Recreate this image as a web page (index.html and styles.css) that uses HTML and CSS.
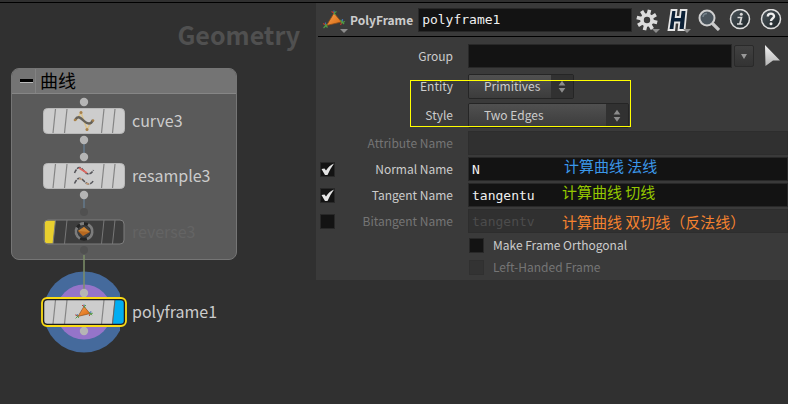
FILE: index.html
```html
<!DOCTYPE html>
<html lang="zh-CN">
<head>
<meta charset="utf-8">
<title>PolyFrame</title>
<link rel="stylesheet" href="styles.css">
</head>
<body>
<svg class="defs" aria-hidden="true">
  <defs>
    <linearGradient id="orange" x1="0" y1="0" x2="1" y2="1">
      <stop offset="0" stop-color="#f9a050"/><stop offset="1" stop-color="#d96a10"/>
    </linearGradient>
    <linearGradient id="glass" x1="0" y1="0" x2="1" y2="1">
      <stop offset="0" stop-color="#4c555b"/><stop offset="1" stop-color="#1c2326"/>
    </linearGradient>
    <linearGradient id="steel" x1="0" y1="0" x2="0" y2="1">
      <stop offset="0" stop-color="#f2f2f2"/><stop offset="1" stop-color="#b4b4b4"/>
    </linearGradient>
    <symbol id="polyframe" viewBox="0 0 24 20">
      <path d="M12 3 L19.5 12 L4.500 15.500 Z" fill="url(#orange)" stroke="#8a4a18" stroke-width=".8"/>
      <path d="M12 3.500 V0.500 M3.500 15.500 V12.500 M20.500 12 V9" stroke="#3f6fb5" stroke-width="1.200"/>
      <path d="M12 3 L9.500 1.500 M4 15 L1 13.500 M20 12 L18.500 15" stroke="#c0392b" stroke-width="1.200"/>
      <path d="M12 3 L14.500 1.500 M12 3 L13.500 5 M1.500 18 L5 14.500 M3 14.500 L5.500 17.500 M18.500 10 L22 14 M19 13 L23 11.500" stroke="#4f9b45" stroke-width="1.200"/>
    </symbol>
    <symbol id="body" viewBox="0 0 82 26">
      <rect x=".5" y=".5" width="81" height="25" rx="4" fill="#cdcdcd" stroke="#b9b9b9"/>
      <path d="M12.500 1 L10 25 M24 1 L21.500 25 M61 1 L58.500 25 M72 1 L69.500 25" stroke="#858585" stroke-width="1.200" fill="none"/>
    </symbol>
  </defs>
</svg>

<main class="workspace">
  <section class="network" aria-label="Network">
    <h1 class="context">Geometry</h1>
    <div class="group">
      <header class="group-head">
        <button class="collapse" type="button" aria-label="Collapse"><span class="minus"></span></button>
        <h2 class="group-title">曲线</h2>
      </header>
    </div>
    <svg class="wires" viewBox="0 0 120 300" aria-hidden="true">
      <circle cx="84" cy="244" r="40.500" fill="#456a9c"/>
      <circle cx="84" cy="244" r="27.500" fill="#9574c9"/>
      <path d="M84 76 V85 M84 131 V141" stroke="#64798c" stroke-width="1.500"/>
      <path d="M84 187 V221" stroke="#7c8f68" stroke-width="1.500"/>
      <g fill="#b5b5b5">
        <circle cx="84" cy="34" r="4.200"/><circle cx="84" cy="72" r="4.200"/>
        <circle cx="84" cy="89" r="4.200"/><circle cx="84" cy="127" r="4.200"/>
        <circle cx="84" cy="225" r="4.200"/><circle cx="84" cy="263" r="4.200"/>
      </g>
      <g fill="#505050"><circle cx="84" cy="144" r="4"/><circle cx="84" cy="182" r="4"/></g>
    </svg>

    <div class="node node-curve">
      <svg class="tile" viewBox="0 0 82 26" aria-hidden="true">
        <use href="#body"/>
        <path d="M33 12.500 L38 4.500 L44 21.500 L49 13" stroke="#dcc48e" stroke-width="1.500" fill="none"/>
        <path d="M32 12 C35 7 38 10 41 13 C44 16 48 17 50 12" stroke="#66625a" stroke-width="2.400" fill="none"/>
        <g fill="#a8814b"><circle cx="38" cy="4.500" r="1.500"/><circle cx="44" cy="21.500" r="1.500"/><circle cx="32" cy="12" r="1.300"/><circle cx="50" cy="12.500" r="1.300"/></g>
      </svg>
      <span class="node-name">curve3</span>
    </div>
    <div class="node node-resample">
      <svg class="tile" viewBox="0 0 82 26" aria-hidden="true">
        <use href="#body"/>
        <path d="M31.500 10 C35 2 38 4 41 8 C44 12 48 12 50.500 7 M31.500 20.500 C35 13 38 15 41 18 C44 22 48 22 50.500 17.500" stroke="#55555a" stroke-width="1.500" stroke-dasharray="4 1" fill="none"/>
        <path d="M36 5 L44 10" stroke="#e0675f" stroke-width="1.600"/>
        <path d="M36 15.500 L39 16.500 M43 20.500 L46 21" stroke="#c29a78" stroke-width="1.600"/>
      </svg>
      <span class="node-name">resample3</span>
    </div>
    <div class="node node-reverse">
      <svg class="tile" viewBox="0 0 82 26" aria-hidden="true">
        <rect x="1" y="1" width="80" height="24" rx="4" fill="#3e3e3e"/>
        <path d="M4 1.500 H12.500 L10 24.500 H4 Q1.500 24.500 1.500 21 V5 Q1.500 1.500 4 1.500" fill="#e8cf2e"/>
        <rect x="1" y="1" width="80" height="24" rx="4" fill="none" stroke="#7d7d7d"/>
        <path d="M24 1 L21.500 25 M61 1 L58.500 25 M72 1 L69.500 25 M12.500 1 L10 25" stroke="#777" stroke-width="1" fill="none"/>
        <circle cx="41" cy="12.500" r="7.800" fill="none" stroke="#242424" stroke-width="3"/>
        <path d="M37 19.500 A8 8 0 0 1 34 8.500 M37 5.500 A8 8 0 0 1 41 4.500 M45 5.500 A8 8 0 0 1 44 20" fill="none" stroke="#7c7c7c" stroke-width="2.800"/>
        <path d="M41 8 L47 13 L40 17 L35 12 Z" fill="#b76820"/><path d="M35 12 L41 8 L47 13 Z" fill="#c98335"/>
      </svg>
      <span class="node-name">reverse3</span>
    </div>
    <div class="node node-polyframe">
      <svg class="tile" viewBox="0 0 82 26" aria-hidden="true">
        <use href="#body"/>
        <path d="M72 1 H78 Q81 1 81 4 V22 Q81 25 78 25 H69.500 Z" fill="#00adf2"/>
        <path d="M72 1 L69.500 25" stroke="#666"/>
        <rect x=".500" y=".500" width="81" height="25" rx="4" fill="none" stroke="#1d1d1d" stroke-width="1.500"/>
        <rect x="-1" y="-1" width="84" height="28" rx="5" fill="none" stroke="#fadb14" stroke-width="1.800"/>
        <use href="#polyframe" x="31" y="5" width="20" height="16"/>
      </svg>
      <span class="node-name">polyframe1</span>
    </div>
  </section>

  <form class="params">
    <header class="bar">
      <button class="tool tool-op" type="button" aria-label="Operator">
        <svg class="op-icon" viewBox="0 0 24 20" aria-hidden="true"><use href="#polyframe"/></svg>
        <span class="caret"></span>
      </button>
      <label class="op-type" for="opname">PolyFrame</label>
      <input class="field op-name" id="opname" value="polyframe1">
      <div class="tools">
        <button class="tool" type="button" aria-label="Settings">
          <svg class="icon" viewBox="0 0 22 22" aria-hidden="true">
            <g stroke="#dcdcdc" stroke-width="3.600"><path d="M11 0.500 V6 M11 16 V21.500 M.500 11 H6 M16 11 H21.500 M3.600 3.600 L7.500 7.500 M14.500 14.500 L18.400 18.400 M3.600 18.400 L7.500 14.500 M14.500 7.500 L18.400 3.600" transform="rotate(14 11 11)"/></g>
            <circle cx="11" cy="11" r="5" fill="none" stroke="#dcdcdc" stroke-width="3.600"/>
          </svg>
          <span class="caret"></span>
        </button>
        <button class="tool" type="button" aria-label="Houdini">
          <svg class="icon" viewBox="0 0 22 22" aria-hidden="true">
            <path d="M4.500 1 H9.500 L8.700 8 H13 L13.800 1 H19.500 L17.500 21 H11.500 L12.300 13.500 H8 L7.200 21 H1.500 Z" fill="#0b2036" stroke="#e6e6e6" stroke-width="1.800"/>
          </svg>
          <span class="caret"></span>
        </button>
        <button class="tool" type="button" aria-label="Search">
          <svg class="icon" viewBox="0 0 22 22" aria-hidden="true">
            <path d="M14.500 14.500 L21 21" stroke="#c9c9c9" stroke-width="3.200"/>
            <circle cx="9" cy="9" r="7.500" fill="#4a545c" stroke="#cfcfcf" stroke-width="2"/>
            <path d="M5 8 A4 4 0 0 1 9 4.500" fill="none" stroke="#75828b" stroke-width="1.500"/>
          </svg>
        </button>
        <button class="tool" type="button" aria-label="Info">
          <svg class="icon" viewBox="0 0 22 22" aria-hidden="true">
            <circle cx="11" cy="10" r="9.500" fill="url(#glass)" stroke="#dedede" stroke-width="1.500"/>
            <circle cx="12.300" cy="5.300" r="1.500" fill="#d8d8d8"/>
            <path d="M8.500 8.500 H12.500 L10.800 15 H13.500 M8 15 H11" fill="none" stroke="#d8d8d8" stroke-width="1.700"/>
          </svg>
        </button>
        <button class="tool" type="button" aria-label="Help">
          <svg class="icon" viewBox="0 0 22 22" aria-hidden="true">
            <circle cx="11" cy="10" r="9.500" fill="url(#glass)" stroke="#dedede" stroke-width="1.500"/>
            <path d="M7.800 7.500 C7.800 3.500 14.300 3.800 14 7.500 C13.800 9.500 11 9.500 11 12" fill="none" stroke="#eee" stroke-width="2.400"/>
            <circle cx="11" cy="14.700" r="1.500" fill="#eee"/>
          </svg>
        </button>
      </div>
    </header>

    <div class="rows">
      <div class="row row-top">
        <label class="name" for="group">Group</label>
        <div class="group-field">
          <input class="field" id="group">
          <button class="drop" type="button" aria-label="Group menu"><span class="caret-inner"></span></button>
          <button class="pick" type="button" aria-label="Select">
            <svg class="pointer" viewBox="0 0 16 22" aria-hidden="true"><path d="M1 0 L16 15.500 L9 15.500 L1.500 21 Z" fill="url(#steel)"/></svg>
          </button>
        </div>
      </div>
      <div class="row row-menu">
        <label class="name" for="entity">Entity</label>
        <span class="menu menu-short">
          <select id="entity"><option>Primitives</option></select>
          <svg class="step" viewBox="0 0 20 24" aria-hidden="true"><path d="M10 6 L13.500 11 H6.500 Z M10 18.500 L13.500 13.500 H6.500 Z" fill="#8c8c8c"/></svg>
        </span>
      </div>
      <div class="row row-menu">
        <label class="name" for="style">Style</label>
        <span class="menu menu-long">
          <select id="style"><option>Two Edges</option></select>
          <svg class="step" viewBox="0 0 20 24" aria-hidden="true"><path d="M10 6 L13.500 11 H6.500 Z M10 18.500 L13.500 13.500 H6.500 Z" fill="#8c8c8c"/></svg>
        </span>
      </div>
      <div class="row">
        <label class="name dim" for="attr">Attribute Name</label>
        <input class="field" id="attr" disabled>
      </div>
      <div class="row">
        <input class="check" type="checkbox" aria-label="Enable Normal Name" checked>
        <label class="name" for="normal">Normal Name</label>
        <input class="field" id="normal" value="N">
        <span class="note note-blue">计算曲线 法线</span>
      </div>
      <div class="row">
        <input class="check" type="checkbox" aria-label="Enable Tangent Name" checked>
        <label class="name" for="tangent">Tangent Name</label>
        <input class="field" id="tangent" value="tangentu">
        <span class="note note-green">计算曲线 切线</span>
      </div>
      <div class="row">
        <input class="check" type="checkbox" aria-label="Enable Bitangent Name">
        <label class="name dim" for="bitangent">Bitangent Name</label>
        <input class="field" id="bitangent" value="tangentv" disabled>
        <span class="note note-orange">计算曲线 双切线（反法线）</span>
      </div>
      <label class="option"><input class="check" type="checkbox">Make Frame Orthogonal</label>
      <label class="option dim"><input class="check" type="checkbox" disabled>Left-Handed Frame</label>
      <div class="highlight"></div>
    </div>
  </form>
</main>
</body>
</html>
```
FILE: styles.css
```css
* { box-sizing: border-box; }

body {
  margin: 0;
  min-height: 100vh;
  background: #303030;
  color: #cccccc;
  font: 12px/18px "Noto Sans CJK SC", "Noto Sans", sans-serif;
}

button, input, select { font: inherit; color: inherit; margin: 0; }
button { padding: 0; border: 0; background: none; }
.defs { position: absolute; width: 0; height: 0; }

.workspace {
  display: grid;
  grid-template-columns: 316px minmax(0, 1fr);
  align-items: start;
  margin-top: 2px;
  border-top: 1px solid #000;
}

/* Network canvas */
.network { position: relative; min-height: 360px; }

.context {
  margin: 0;
  padding: 13px 16px 0 0;
  text-align: right;
  font-size: 25px;
  line-height: 36px;
  font-weight: 700;
  color: #505050;
}

.group {
  position: absolute;
  left: 11px;
  top: 65px;
  width: 226px;
  height: 192px;
  border: 1px solid #757575;
  border-radius: 8px;
  background: #5a5a5a;
  overflow: hidden;
}
.group-head {
  display: flex;
  height: 25px;
  background: #747474;
  border-bottom: 1px solid #868686;
}
.collapse {
  display: grid;
  place-items: center;
  width: 24px;
  padding-left: 6px;
  border-right: 1px solid #828282;
}
.minus { width: 13px; height: 4px; background: #000; border-bottom: 1px solid #bbb; }
.group-title {
  margin: 0 0 0 4px;
  font-size: 18px;
  line-height: 22px;
  font-weight: 400;
  color: #000;
}

.wires { position: absolute; left: 0; top: 65px; width: 120px; height: 300px; }

.node {
  position: absolute;
  left: 43px;
  display: flex;
  align-items: center;
  gap: 7px;
}
.node-curve { top: 105px; }
.node-resample { top: 160px; }
.node-reverse { top: 216px; color: #646464; }
.node-polyframe { top: 296px; }
.tile { width: 82px; height: 26px; overflow: visible; }
.node-name { padding-bottom: 2px; font-size: 16px; line-height: 24px; }

/* Parameter pane */
.params { background: #3a3a3a; padding-bottom: 2px; }

.bar {
  display: flex;
  align-items: center;
  height: 34px;
  margin-left: 2px;
  padding: 0 6px 0 4px;
  border-bottom: 1px solid #000;
}
.tool { position: relative; display: block; width: 22px; height: 24px; }
.tool-op { width: 24px; }
.op-icon { display: block; width: 24px; height: 20px; }
.icon { display: block; width: 22px; height: 22px; }
.caret {
  position: absolute;
  right: -2px;
  bottom: -1px;
  border: 4px solid transparent;
  border-top-color: #8c8c8c;
  border-bottom: 0;
}
.op-type { margin: 0 5px 0 4px; font-weight: 700; }
.tools { display: flex; gap: 9px; margin-left: 4px; }

.field {
  display: block;
  min-width: 0;
  width: 100%;
  height: 24px;
  padding: 0 3px;
  border: 1px solid #282828;
  border-radius: 0;
  background: #131313;
  color: #f0f0f0;
  font: 13px/20px "DejaVu Sans Mono", "Liberation Mono", monospace;
}
.field:disabled { background: #303030; border-color: #2d2d2d; color: #4c4c4c; }
.op-name { flex: 1; }

.rows { position: relative; padding: 7px 0 0 4px; }
.row {
  position: relative;
  display: grid;
  grid-template-columns: 16px 117px minmax(0, 1fr);
  align-items: center;
  height: 26px;
}
.row-top { height: 24px; margin-bottom: 4px; }
.row-menu { height: 29px; }
.name { grid-column: 2; padding-bottom: 1px; text-align: right; }
.row > :nth-last-child(1), .row > .field { grid-row: 1; }
.row > .field, .menu, .group-field { grid-column: 3; margin-left: 15px; }
.row > .field { width: auto; }
.row > .check { grid-column: 1; }
.dim { color: #757575; }

.group-field { display: flex; align-items: center; padding-right: 8px; }
.group-field .field { flex: 1; }
.drop {
  display: grid;
  place-items: center;
  width: 20px;
  height: 22px;
  margin: 0 10px 0 2px;
  border: 1px solid #2a2a2a;
  border-radius: 2px;
  background: linear-gradient(#414141, #333333);
}
.caret-inner { border: 3px solid transparent; border-top: 5px solid #999; border-bottom: 0; }
.pick, .pointer { display: block; width: 16px; height: 22px; }

.menu {
  display: grid;
  grid-template-columns: minmax(0, 1fr) 22px;
  height: 25px;
  border: 1px solid #252525;
  border-radius: 2px;
  background: #343434;
}
.menu-short { width: 106px; }
.menu-long { width: 161px; }
.menu select {
  grid-area: 1 / 1 / 2 / 3;
  appearance: none;
  padding: 0 0 2px 15px;
  border: 0;
  border-radius: 1px;
  background: linear-gradient(#505050, #3c3c3c);
}
.step {
  grid-area: 1 / 2;
  width: 22px;
  height: 23px;
  background: #313131;
  pointer-events: none;
}

.check {
  appearance: none;
  width: 15px;
  height: 15px;
  border: 1px solid #282828;
  background: #131313;
}
.check:checked {
  background: #131313 url("data:image/svg+xml,%3Csvg xmlns='http://www.w3.org/2000/svg' viewBox='0 0 13 13'%3E%3Cpath d='M.5 6 L3.500 5.500 L5 7.500 Q8 2.500 13 .5 Q9 6 6.500 12 L4 12 Z' fill='%23e4e4e4'/%3E%3C/svg%3E");
}
.check:disabled { background: #333333; border-color: #303030; }
.option {
  display: flex;
  align-items: center;
  gap: 9px;
  height: 22px;
  margin-left: 149px;
}

/* Annotations drawn over the pane */
.note {
  position: absolute;
  top: 0;
  font-size: 15px;
  line-height: 20px;
  white-space: nowrap;
  pointer-events: none;
}
.note-blue { left: 244px; color: #3b97e8; }
.note-green { left: 242px; color: #95c800; }
.note-orange { left: 242px; top: 4px; color: #f5822f; }
.highlight {
  position: absolute;
  left: 94px;
  top: 43px;
  width: 221px;
  height: 47px;
  border: 1px solid #ffff00;
  pointer-events: none;
}
```
